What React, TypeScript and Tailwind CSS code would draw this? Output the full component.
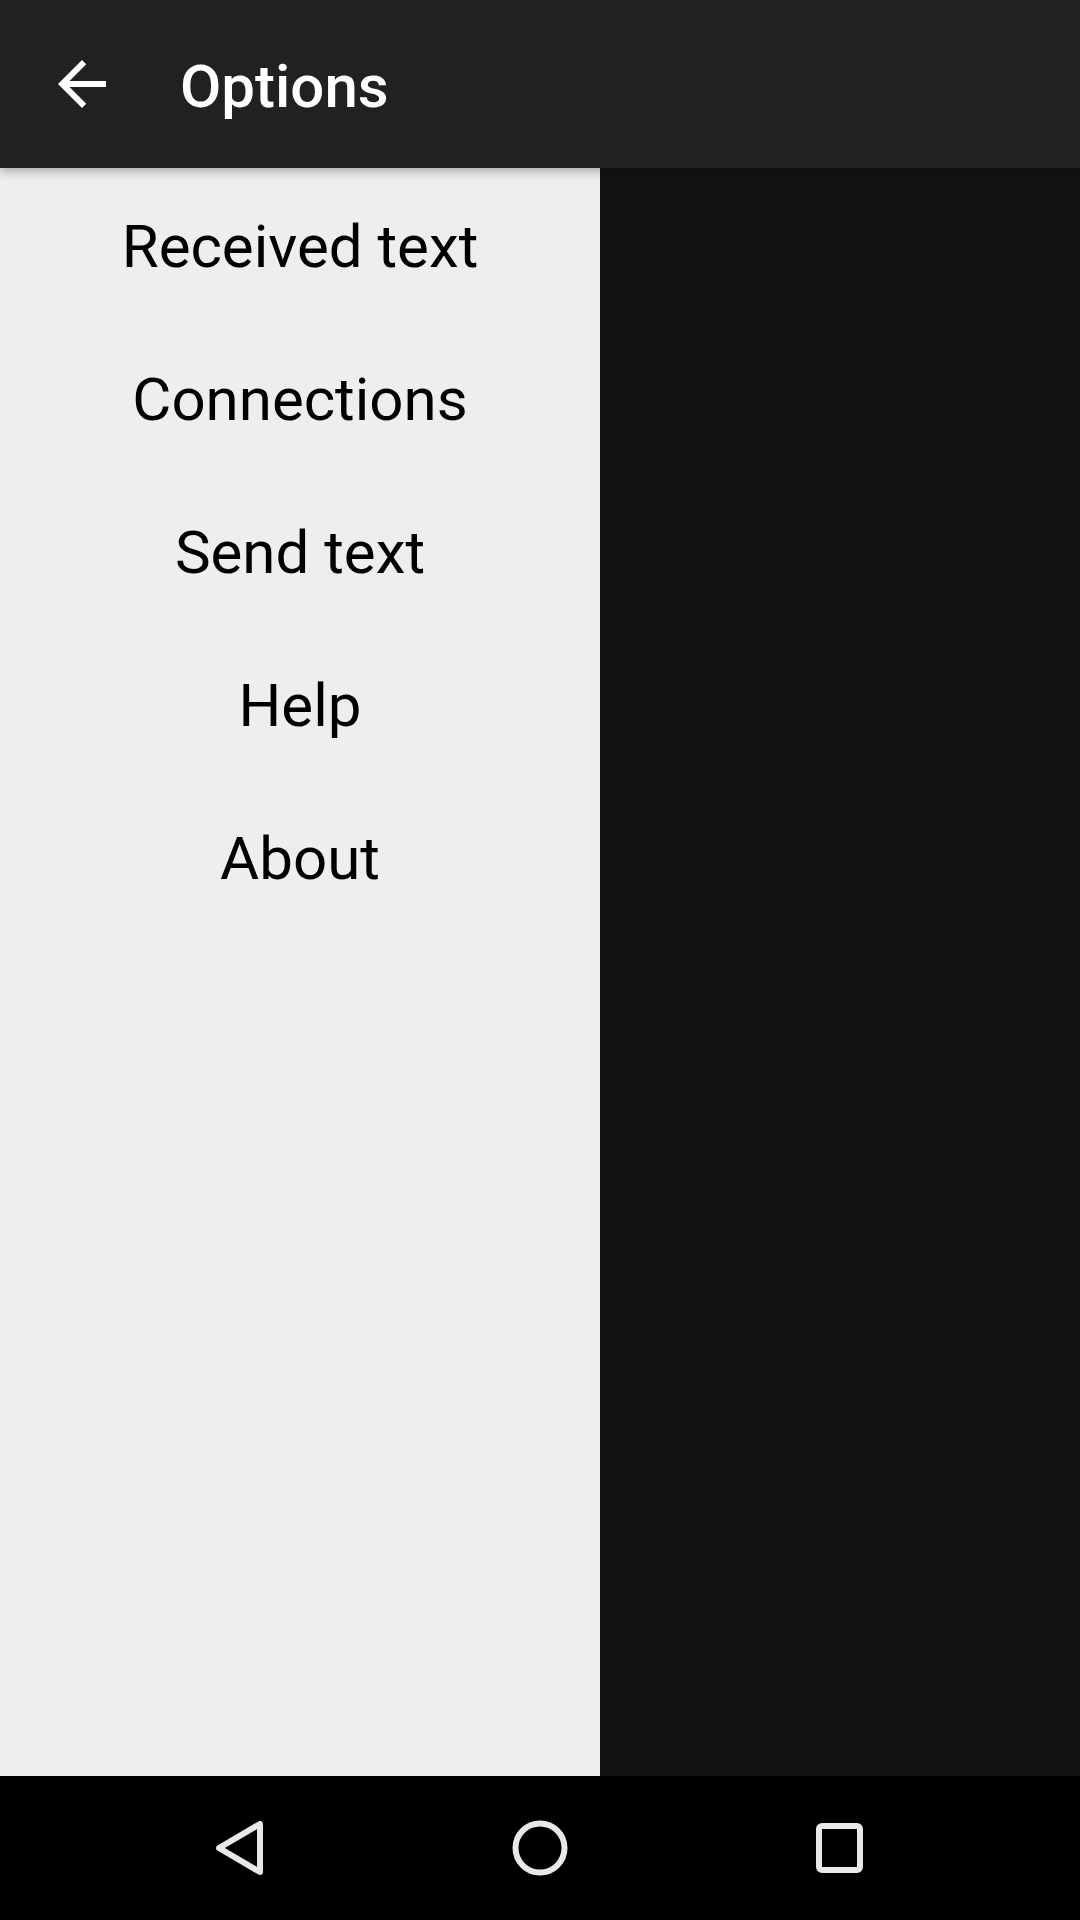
import React from "react";

const items = ["Received text", "Connections", "Send text", "Help", "About"];

export default function App() {
  return (
    <div className="flex h-[1920px] w-[1080px] flex-col overflow-hidden font-['Roboto',sans-serif]">
      <header className="relative z-10 flex h-[168px] shrink-0 items-center bg-[#212121] pl-[46px] shadow-[0_3px_10px_rgba(0,0,0,0.3)]">
        <svg width="72" height="72" viewBox="0 0 24 24" fill="#ffffff">
          <path d="M20 11H7.83l5.59-5.59L12 4l-8 8 8 8 1.41-1.41L7.83 13H20v-2z" />
        </svg>
        <h1 className="ml-[62px] pt-[5px] text-[60px] font-medium leading-none text-white">Options</h1>
      </header>
      <main className="flex min-h-0 flex-1">
        <nav className="flex w-[600px] flex-col bg-[#eeeeee]">
          {items.map((t) => (
            <div
              key={t}
              className="flex h-[153px] items-center justify-center border-b border-[#f3f3f3] pt-[5px] text-[60px] leading-none text-black"
            >
              {t}
            </div>
          ))}
        </nav>
        <div className="flex-1 bg-[#131313]" />
      </main>
      <footer className="flex h-[144px] shrink-0 items-center justify-center bg-black">
        <div className="flex w-[300px] justify-center">
          <svg width="90" height="90" viewBox="0 0 90 90" fill="none" stroke="#e8e8e8" strokeWidth="6" strokeLinejoin="round">
            <path d="M24 45 L65 21 L65 69 Z" />
          </svg>
        </div>
        <div className="flex w-[300px] justify-center">
          <svg width="90" height="90" viewBox="0 0 90 90" fill="none" stroke="#e8e8e8" strokeWidth="6">
            <circle cx="45" cy="45" r="24.5" />
          </svg>
        </div>
        <div className="flex w-[300px] justify-center">
          <svg width="90" height="90" viewBox="0 0 90 90" fill="none" stroke="#e8e8e8" strokeWidth="6">
            <rect x="24" y="23" width="41" height="44" rx="3" />
          </svg>
        </div>
      </footer>
    </div>
  );
}
